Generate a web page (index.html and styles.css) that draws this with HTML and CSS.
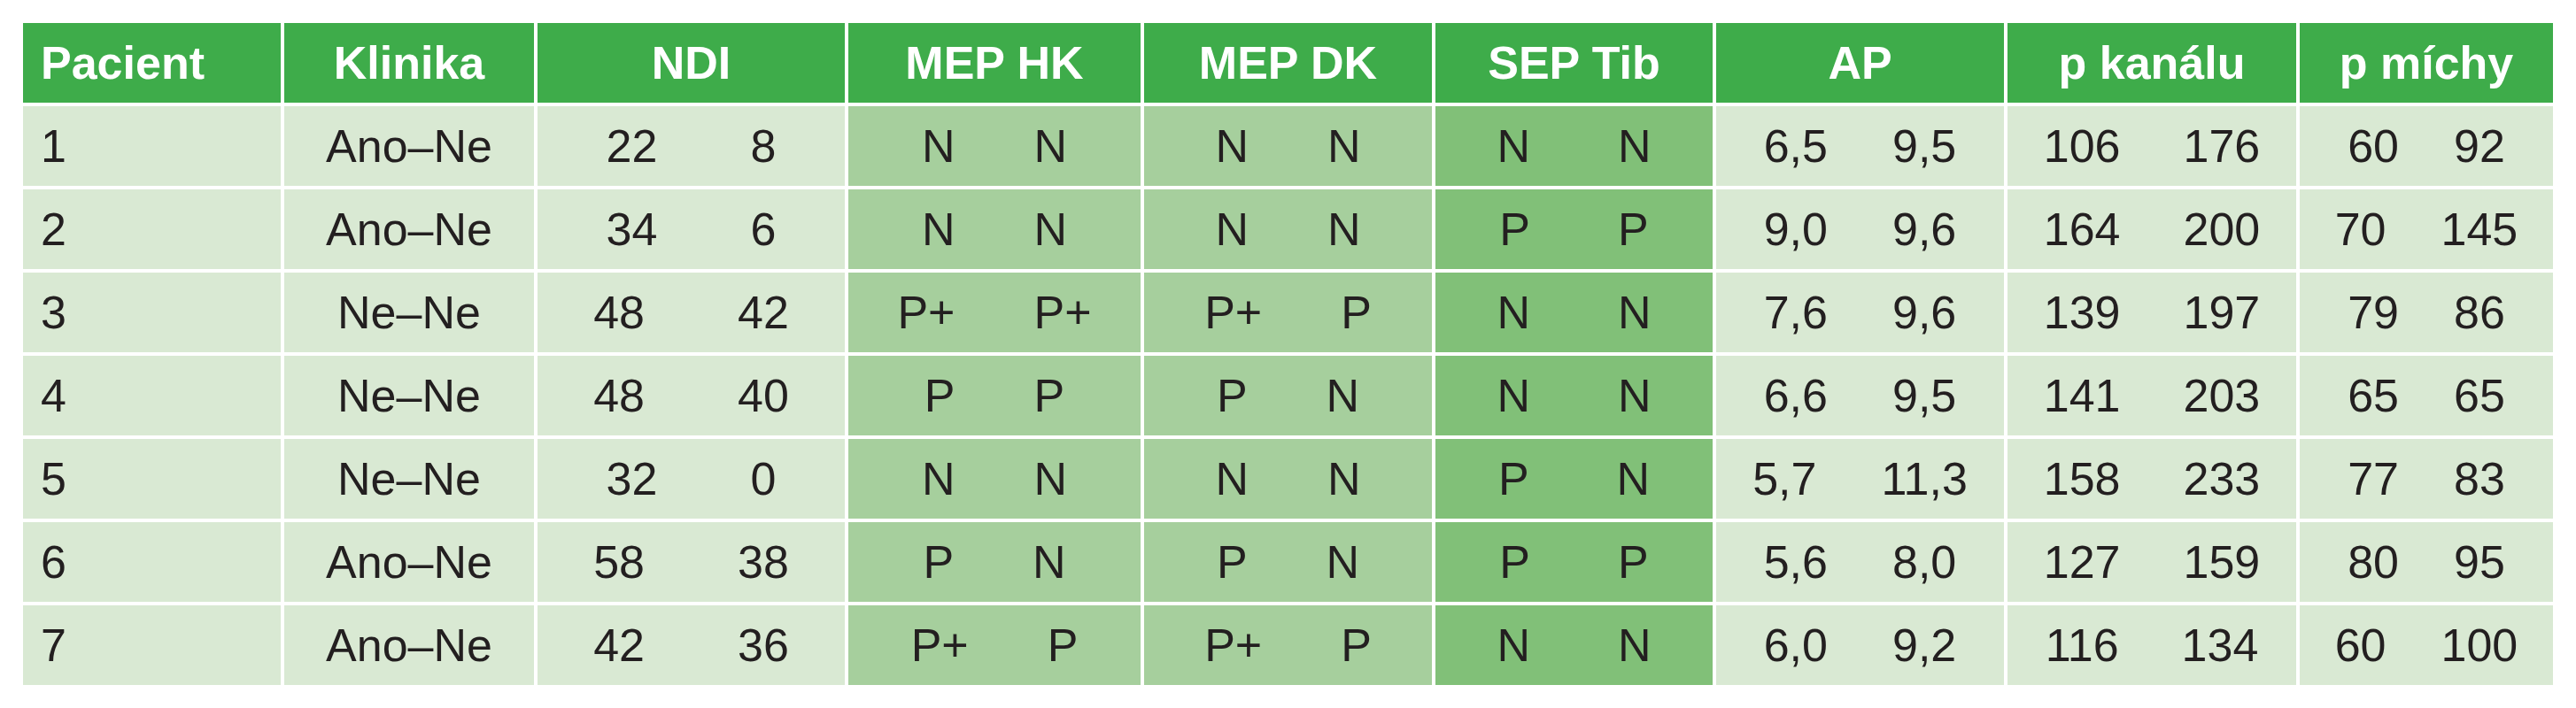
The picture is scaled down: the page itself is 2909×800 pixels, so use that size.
FILE: index.html
```html
<!DOCTYPE html>
<html lang="cs">
<head>
<meta charset="utf-8">
<title>Tabulka pacientů</title>
<link rel="stylesheet" href="styles.css">
</head>
<body>
<div class="table">
  <div class="row head">
    <div class="cell first">Pacient</div>
    <div class="cell">Klinika</div>
    <div class="cell">NDI</div>
    <div class="cell">MEP HK</div>
    <div class="cell">MEP DK</div>
    <div class="cell">SEP Tib</div>
    <div class="cell">AP</div>
    <div class="cell">p kanálu</div>
    <div class="cell">p míchy</div>
  </div>

  <div class="row">
    <div class="cell first">1</div>
    <div class="cell">Ano–Ne</div>
    <div class="cell pair g-ndi"><span>22</span><span>8</span></div>
    <div class="cell pair mep g-mep"><span>N</span><span>N</span></div>
    <div class="cell pair mep g-mep"><span>N</span><span>N</span></div>
    <div class="cell pair sep g-sep"><span>N</span><span>N</span></div>
    <div class="cell pair g-ap"><span>6,5</span><span>9,5</span></div>
    <div class="cell pair g-pk"><span>106</span><span>176</span></div>
    <div class="cell pair g-pm"><span>60</span><span>92</span></div>
  </div>

  <div class="row">
    <div class="cell first">2</div>
    <div class="cell">Ano–Ne</div>
    <div class="cell pair g-ndi"><span>34</span><span>6</span></div>
    <div class="cell pair mep g-mep"><span>N</span><span>N</span></div>
    <div class="cell pair mep g-mep"><span>N</span><span>N</span></div>
    <div class="cell pair sep g-sep"><span>P</span><span>P</span></div>
    <div class="cell pair g-ap"><span>9,0</span><span>9,6</span></div>
    <div class="cell pair g-pk"><span>164</span><span>200</span></div>
    <div class="cell pair g-pm"><span>70</span><span>145</span></div>
  </div>

  <div class="row">
    <div class="cell first">3</div>
    <div class="cell">Ne–Ne</div>
    <div class="cell pair g-ndi"><span>48</span><span>42</span></div>
    <div class="cell pair mep g-mep"><span>P+</span><span>P+</span></div>
    <div class="cell pair mep g-mep"><span>P+</span><span>P</span></div>
    <div class="cell pair sep g-sep"><span>N</span><span>N</span></div>
    <div class="cell pair g-ap"><span>7,6</span><span>9,6</span></div>
    <div class="cell pair g-pk"><span>139</span><span>197</span></div>
    <div class="cell pair g-pm"><span>79</span><span>86</span></div>
  </div>

  <div class="row">
    <div class="cell first">4</div>
    <div class="cell">Ne–Ne</div>
    <div class="cell pair g-ndi"><span>48</span><span>40</span></div>
    <div class="cell pair mep g-mep"><span>P</span><span>P</span></div>
    <div class="cell pair mep g-mep"><span>P</span><span>N</span></div>
    <div class="cell pair sep g-sep"><span>N</span><span>N</span></div>
    <div class="cell pair g-ap"><span>6,6</span><span>9,5</span></div>
    <div class="cell pair g-pk"><span>141</span><span>203</span></div>
    <div class="cell pair g-pm"><span>65</span><span>65</span></div>
  </div>

  <div class="row">
    <div class="cell first">5</div>
    <div class="cell">Ne–Ne</div>
    <div class="cell pair g-ndi"><span>32</span><span>0</span></div>
    <div class="cell pair mep g-mep"><span>N</span><span>N</span></div>
    <div class="cell pair mep g-mep"><span>N</span><span>N</span></div>
    <div class="cell pair sep g-sep"><span>P</span><span>N</span></div>
    <div class="cell pair g-ap"><span>5,7</span><span>11,3</span></div>
    <div class="cell pair g-pk"><span>158</span><span>233</span></div>
    <div class="cell pair g-pm"><span>77</span><span>83</span></div>
  </div>

  <div class="row">
    <div class="cell first">6</div>
    <div class="cell">Ano–Ne</div>
    <div class="cell pair g-ndi"><span>58</span><span>38</span></div>
    <div class="cell pair mep g-mep"><span>P</span><span>N</span></div>
    <div class="cell pair mep g-mep"><span>P</span><span>N</span></div>
    <div class="cell pair sep g-sep"><span>P</span><span>P</span></div>
    <div class="cell pair g-ap"><span>5,6</span><span>8,0</span></div>
    <div class="cell pair g-pk"><span>127</span><span>159</span></div>
    <div class="cell pair g-pm"><span>80</span><span>95</span></div>
  </div>

  <div class="row">
    <div class="cell first">7</div>
    <div class="cell">Ano–Ne</div>
    <div class="cell pair g-ndi"><span>42</span><span>36</span></div>
    <div class="cell pair mep g-mep"><span>P+</span><span>P</span></div>
    <div class="cell pair mep g-mep"><span>P+</span><span>P</span></div>
    <div class="cell pair sep g-sep"><span>N</span><span>N</span></div>
    <div class="cell pair g-ap"><span>6,0</span><span>9,2</span></div>
    <div class="cell pair g-pk"><span>116</span><span>134</span></div>
    <div class="cell pair g-pm"><span>60</span><span>100</span></div>
  </div>
</div>
</body>
</html>
```

FILE: styles.css
```css
html, body {
  margin: 0;
  padding: 0;
  background: #ffffff;
}

body {
  font-family: "Liberation Sans", Arial, sans-serif;
  color: #231f20;
}

.table {
  display: grid;
  grid-template-columns: 291px 282px 347px 330px 325px 313px 325px 326px 286px;
  grid-auto-rows: 90px;
  gap: 4px;
  margin: 26px 0 0 26px;
  width: max-content;
}

.row {
  display: contents;
}

.cell {
  display: flex;
  align-items: center;
  justify-content: center;
  background: #d9e9d3;
  font-size: 52px;
  white-space: nowrap;
}

.cell.first {
  justify-content: flex-start;
  padding-left: 20px;
}

.cell.mep {
  background: #a6cf9d;
}

.cell.sep {
  background: #81c078;
}

.head .cell {
  background: #3eac4a;
  color: #ffffff;
  font-weight: bold;
}

.g-ndi { gap: 105px; }
.g-mep { gap: 89px; }
.g-sep { gap: 99px; }
.g-ap  { gap: 73px; }
.g-pk  { gap: 71px; }
.g-pm  { gap: 62px; }
```
